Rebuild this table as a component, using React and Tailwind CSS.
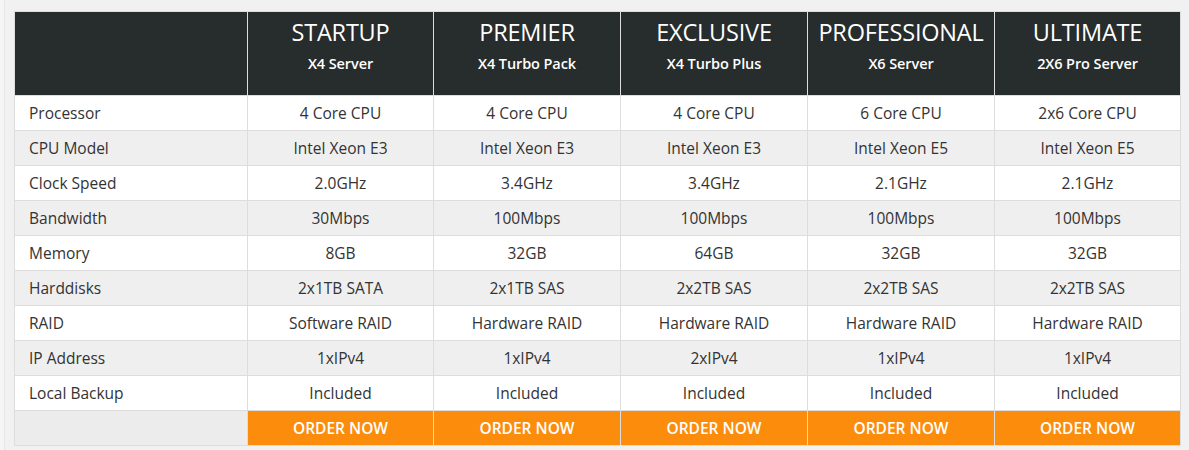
const plans = [
  { name: "STARTUP", sub: "X4 Server" },
  { name: "PREMIER", sub: "X4 Turbo Pack" },
  { name: "EXCLUSIVE", sub: "X4 Turbo Plus" },
  { name: "PROFESSIONAL", sub: "X6 Server" },
  { name: "ULTIMATE", sub: "2X6 Pro Server" },
];

const rows = [
  ["Processor", "4 Core CPU", "4 Core CPU", "4 Core CPU", "6 Core CPU", "2x6 Core CPU"],
  ["CPU Model", "Intel Xeon E3", "Intel Xeon E3", "Intel Xeon E3", "Intel Xeon E5", "Intel Xeon E5"],
  ["Clock Speed", "2.0GHz", "3.4GHz", "3.4GHz", "2.1GHz", "2.1GHz"],
  ["Bandwidth", "30Mbps", "100Mbps", "100Mbps", "100Mbps", "100Mbps"],
  ["Memory", "8GB", "32GB", "64GB", "32GB", "32GB"],
  ["Harddisks", "2x1TB SATA", "2x1TB SAS", "2x2TB SAS", "2x2TB SAS", "2x2TB SAS"],
  ["RAID", "Software RAID", "Hardware RAID", "Hardware RAID", "Hardware RAID", "Hardware RAID"],
  ["IP Address", "1xIPv4", "1xIPv4", "2xIPv4", "1xIPv4", "1xIPv4"],
  ["Local Backup", "Included", "Included", "Included", "Included", "Included"],
];

export default function App() {
  return (
    <div
      className="min-h-[450px] bg-[#f5f5f5] pl-[4px]"
      style={{ fontFamily: '"Open Sans", sans-serif' }}
    >
      <div className="min-h-[450px] border-l border-[#e6e6e6] bg-[#f1f1f1] pt-[11px] pl-[9px]">
        <table className="w-[1166px] table-fixed border-collapse text-[15.5px] text-[#333]">
          <colgroup>
            <col className="w-[233px]" />
            <col className="w-[186px]" />
            <col className="w-[187px]" />
            <col className="w-[187px]" />
            <col className="w-[187px]" />
            <col className="w-[186px]" />
          </colgroup>
          <thead>
            <tr className="h-[84px] bg-[#272c2c] text-white">
              <th className="border border-[#dddddd]"></th>
              {plans.map((p) => (
                <th key={p.name} className="border border-[#dddddd] pt-[5px] text-center align-top">
                  <div className="text-[23.5px] font-medium leading-[30px] tracking-[-0.2px]">{p.name}</div>
                  <div className="mt-[8px] text-[14.5px] font-semibold leading-[18px] tracking-[-0.1px]">{p.sub}</div>
                </th>
              ))}
            </tr>
          </thead>
          <tbody>
            {rows.map((r, i) => (
              <tr key={r[0]} className={`h-[35px] ${i % 2 === 0 ? "bg-white" : "bg-[#efefef]"}`}>
                <td className="border border-[#dddddd] pt-[2px] pl-[14px]">{r[0]}</td>
                {r.slice(1).map((v, j) => (
                  <td key={j} className="border border-[#dddddd] pt-[2px] text-center">
                    {v}
                  </td>
                ))}
              </tr>
            ))}
            <tr className="h-[35px] bg-[#ececec]">
              <td className="border border-[#dddddd]"></td>
              {plans.map((p) => (
                <td key={p.name} className="border border-[#dddddd] bg-[#fc8c0c] pt-[2px] text-center font-semibold text-white">
                  ORDER NOW
                </td>
              ))}
            </tr>
          </tbody>
        </table>
      </div>
    </div>
  );
}
